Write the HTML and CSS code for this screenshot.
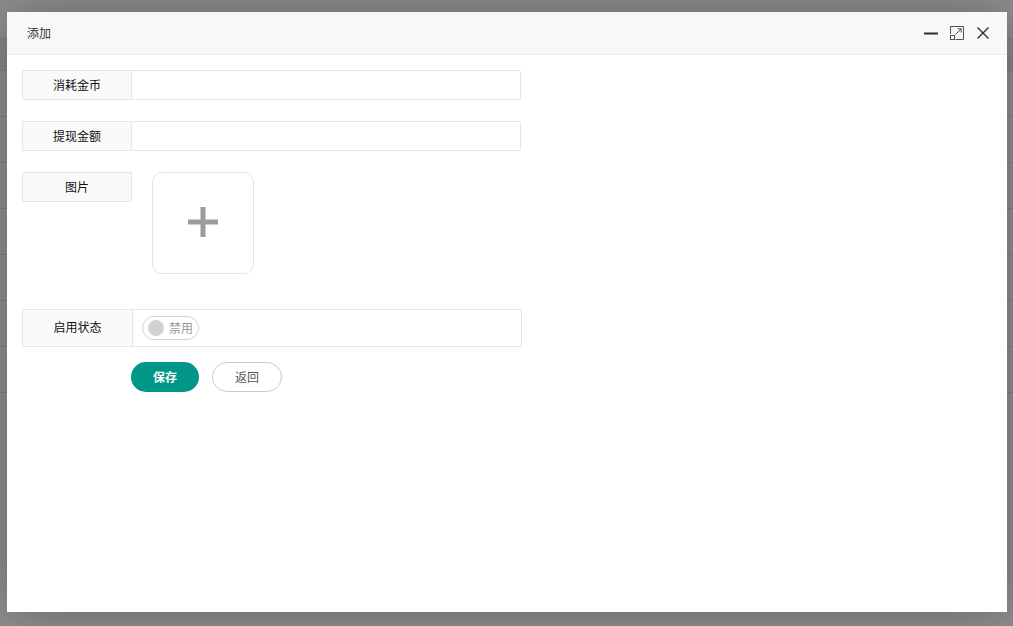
FILE: index.html
```html
<!DOCTYPE html>
<html lang="en">
<head>
    <meta charset="UTF-8">
    <title>添加</title>
    <link rel="stylesheet" href="styles.css">
</head>
<body>
    <!-- table rows behind the shade -->
    <div class="backdrop">
        <div class="back-head"></div>
        <div class="back-row back-row-dark"></div>
        <div class="back-row"></div>
        <div class="back-row"></div>
        <div class="back-row"></div>
        <div class="back-row"></div>
        <div class="back-row"></div>
        <div class="back-row"></div>
        <div class="back-row"></div>
    </div>
    <div class="shade"></div>

    <div class="layer">
        <div class="layer-title">
            <span class="layer-name">添加</span>
            <div class="layer-tools">
                <svg class="tool-min" width="14" height="14" viewBox="0 0 14 14">
                    <path d="M0 7.5H14" stroke="#2e2d3c" stroke-width="2" fill="none"/>
                </svg>
                <svg class="tool-max" width="14" height="14" viewBox="0 0 14 14" fill="none" stroke="#50505c" stroke-width="1">
                    <path d="M0.5 8V0.5H13.5V13.5H5.5"/>
                    <rect x="0.5" y="9.5" width="4" height="4"/>
                    <path d="M5.5 8.5L11 3M7.5 2.8H11.2V6.5"/>
                </svg>
                <svg class="tool-close" width="12" height="12" viewBox="0 0 12 12">
                    <path d="M0.5 0.5L11.5 11.5M11.5 0.5L0.5 11.5" stroke="#2e2d3c" stroke-width="1.4" fill="none"/>
                </svg>
            </div>
        </div>
        <form class="form">
            <div class="form-item">
                <label class="form-label">消耗金币</label>
                <input class="form-input" type="text">
            </div>
            <div class="form-item">
                <label class="form-label">提现金额</label>
                <input class="form-input" type="text">
            </div>
            <div class="form-item form-item-pic">
                <label class="form-label">图片</label>
                <div class="upload">
                    <svg class="upload-plus" width="30" height="30" viewBox="0 0 30 30">
                        <path d="M15 0V30M0 15H30" stroke="#9c9c9c" stroke-width="5" fill="none"/>
                    </svg>
                </div>
            </div>
            <div class="form-item form-item-status">
                <label class="form-label">启用状态</label>
                <div class="status-cell">
                    <div class="switch">
                        <i class="switch-knob"></i>
                        <span class="switch-text">禁用</span>
                    </div>
                </div>
            </div>
            <div class="form-buttons">
                <button class="btn btn-save" type="button">保存</button>
                <button class="btn btn-back" type="button">返回</button>
            </div>
        </form>
    </div>
</body>
</html>
```

FILE: styles.css
```css
* {
    box-sizing: border-box;
}

html, body {
    height: 100%;
}

body {
    margin: 0;
    overflow: hidden;
    background-color: #fff;
    font-family: "Noto Sans CJK SC", "Liberation Sans", sans-serif;
    font-size: 12px;
    color: #111;
}

.backdrop {
    height: 100%;
}

.back-head {
    height: 39px;
    border-bottom: 1px solid #e6e6e6;
}

.back-row {
    height: 46px;
    border-bottom: 1px solid #e6e6e6;
}

.back-row-dark {
    height: 32px;
    background-color: #f2f2f2;
}

.shade {
    position: absolute;
    top: 0;
    left: 0;
    width: 100%;
    height: 100%;
    background-color: rgba(0, 0, 0, 0.44);
}

.layer {
    position: absolute;
    top: 12px;
    left: 7px;
    width: 1000px;
    height: 600px;
    background-color: #fff;
    box-shadow: 1px 1px 50px rgba(0, 0, 0, 0.3);
}

.layer-title {
    height: 43px;
    padding: 0 18px 0 20px;
    display: flex;
    align-items: center;
    justify-content: space-between;
    background-color: #f8f8f8;
    border-bottom: 1px solid #eee;
    color: #333;
}

.layer-name {
    margin-bottom: 2px;
    font-size: 12px;
}

.layer-tools {
    display: flex;
    align-items: center;
}

.tool-max {
    margin-left: 12px;
}

.tool-close {
    margin-left: 13px;
}

.form {
    padding: 15px 15px 0;
}

.form-item {
    display: flex;
    width: 499px;
    margin-bottom: 21px;
}

.form-label {
    flex: none;
    width: 110px;
    height: 30px;
    line-height: 27px;
    text-align: center;
    background-color: #fafafa;
    border: 1px solid #e6e6e6;
    border-radius: 2px 0 0 2px;
}

.form-input {
    flex: 1;
    min-width: 0;
    height: 30px;
    border: 1px solid #e6e6e6;
    border-left: none;
    border-radius: 0 2px 2px 0;
    outline: none;
}

.form-item-pic {
    margin-bottom: 35px;
}

.upload {
    width: 102px;
    height: 102px;
    margin-left: 20px;
    display: flex;
    align-items: center;
    justify-content: center;
    border: 1px solid #e6e6e6;
    border-radius: 10px;
}

.upload-plus {
    margin-bottom: 3px;
}

.form-item-status {
    width: 500px;
    height: 38px;
    margin-bottom: 15px;
    border: 1px solid #e6e6e6;
}

.form-item-status .form-label {
    width: 110px;
    height: 36px;
    line-height: 33px;
    border: none;
    border-right: 1px solid #e6e6e6;
    border-radius: 0;
}

.status-cell {
    flex: 1;
    display: flex;
    align-items: center;
    padding-left: 9px;
}

.switch {
    width: 57px;
    height: 24px;
    display: flex;
    align-items: center;
    padding-left: 5px;
    border: 1px solid #d2d2d2;
    border-radius: 20px;
    color: #999;
}

.switch-knob {
    width: 16px;
    height: 16px;
    margin-right: 5px;
    border-radius: 50%;
    background-color: #d2d2d2;
}

.switch-text {
    margin-bottom: 2px;
}

.form-buttons {
    display: flex;
    padding-left: 109px;
}

.btn {
    height: 30px;
    padding: 0 0 2px;
    border-radius: 15px;
    font-family: inherit;
    font-size: 12px;
    cursor: pointer;
}

.btn-save {
    width: 68px;
    border: none;
    background-color: #009688;
    color: #fff;
    font-weight: 700;
}

.btn-back {
    width: 70px;
    margin-left: 13px;
    background-color: #fff;
    border: 1px solid #c9c9c9;
    color: #555;
}
```
